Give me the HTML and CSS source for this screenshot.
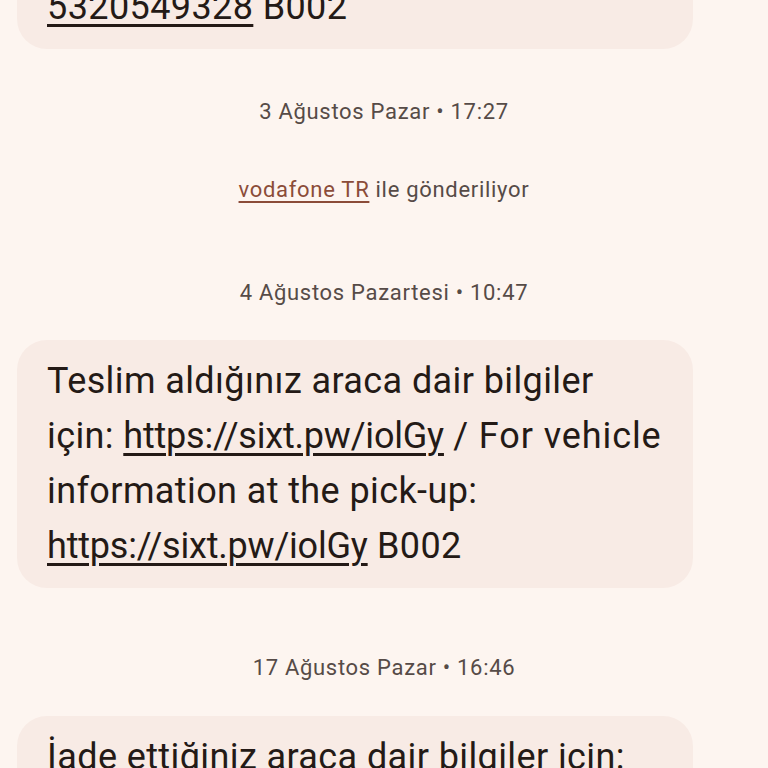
FILE: index.html
```html
<!DOCTYPE html>
<html lang="tr">
<head>
<meta charset="utf-8">
<link rel="stylesheet" href="styles.css">
</head>
<body>
<main class="thread">
  <div class="bubble bubble-first">
    <p class="msg"><span class="link">5320549328</span> B002</p>
  </div>
  <div class="meta meta-1">3 Ağustos Pazar • 17:27</div>
  <div class="meta meta-sim"><span class="sim-link">vodafone TR</span> ile gönderiliyor</div>
  <div class="meta meta-2">4 Ağustos Pazartesi • 10:47</div>
  <div class="bubble bubble-2">
    <p class="msg">Teslim aldığınız araca dair bilgiler<br>için: <span class="link url">https://sixt.pw/iolGy</span> <span class="wide">/ For vehicle</span><br>information at the pick-up:<br><span class="link url">https://sixt.pw/iolGy</span> B002</p>
  </div>
  <div class="meta meta-3">17 Ağustos Pazar • 16:46</div>
  <div class="bubble bubble-3">
    <p class="msg">İade ettiğiniz araca dair bilgiler için:<br><span class="link url">https://sixt.pw/iolGy</span> / For vehicle<br>information at the return:<br><span class="link url">https://sixt.pw/iolGy</span> B002</p>
  </div>
</main>
</body>
</html>
```
FILE: styles.css
```css
html, body {
  margin: 0;
  padding: 0;
  background: #fdf5f0;
  height: 768px;
  overflow: hidden;
}
.thread {
  display: flex;
  flex-direction: column;
  font-family: Roboto, "Noto Sans", sans-serif;
  color: #241a16;
}
.bubble {
  margin-left: 17px;
  width: 676px;
  box-sizing: border-box;
  background: #f8ebe5;
  border-radius: 30px;
  padding: 14px 10px 14px 30px;
}
.msg {
  margin: 0;
  font-size: 36px;
  letter-spacing: 0.4px;
  line-height: 55px;
  white-space: nowrap;
}
.link {
  text-decoration: underline;
  text-decoration-thickness: 3px;
  text-underline-offset: 5px;
}
.url {
  letter-spacing: -0.2px;
}
.wide {
  letter-spacing: 0.9px;
}
.bubble-first {
  margin-top: -20px;
  padding-top: 0;
  padding-bottom: 14px;
  border-top-left-radius: 0;
  border-top-right-radius: 0;
}
.meta {
  text-align: center;
  font-size: 22px;
  letter-spacing: 0.7px;
  line-height: 30px;
  color: #564b47;
}
.meta-1 { margin-top: 48px; }
.meta-sim { margin-top: 48px; }
.meta-2 { margin-top: 73px; }
.bubble-2 { margin-top: 32px; }
.meta-3 { margin-top: 65px; }
.bubble-3 { margin-top: 33px; }
.sim-link {
  color: #8b4c39;
  text-decoration: underline;
  text-decoration-thickness: 2px;
  text-underline-offset: 4px;
}
```
